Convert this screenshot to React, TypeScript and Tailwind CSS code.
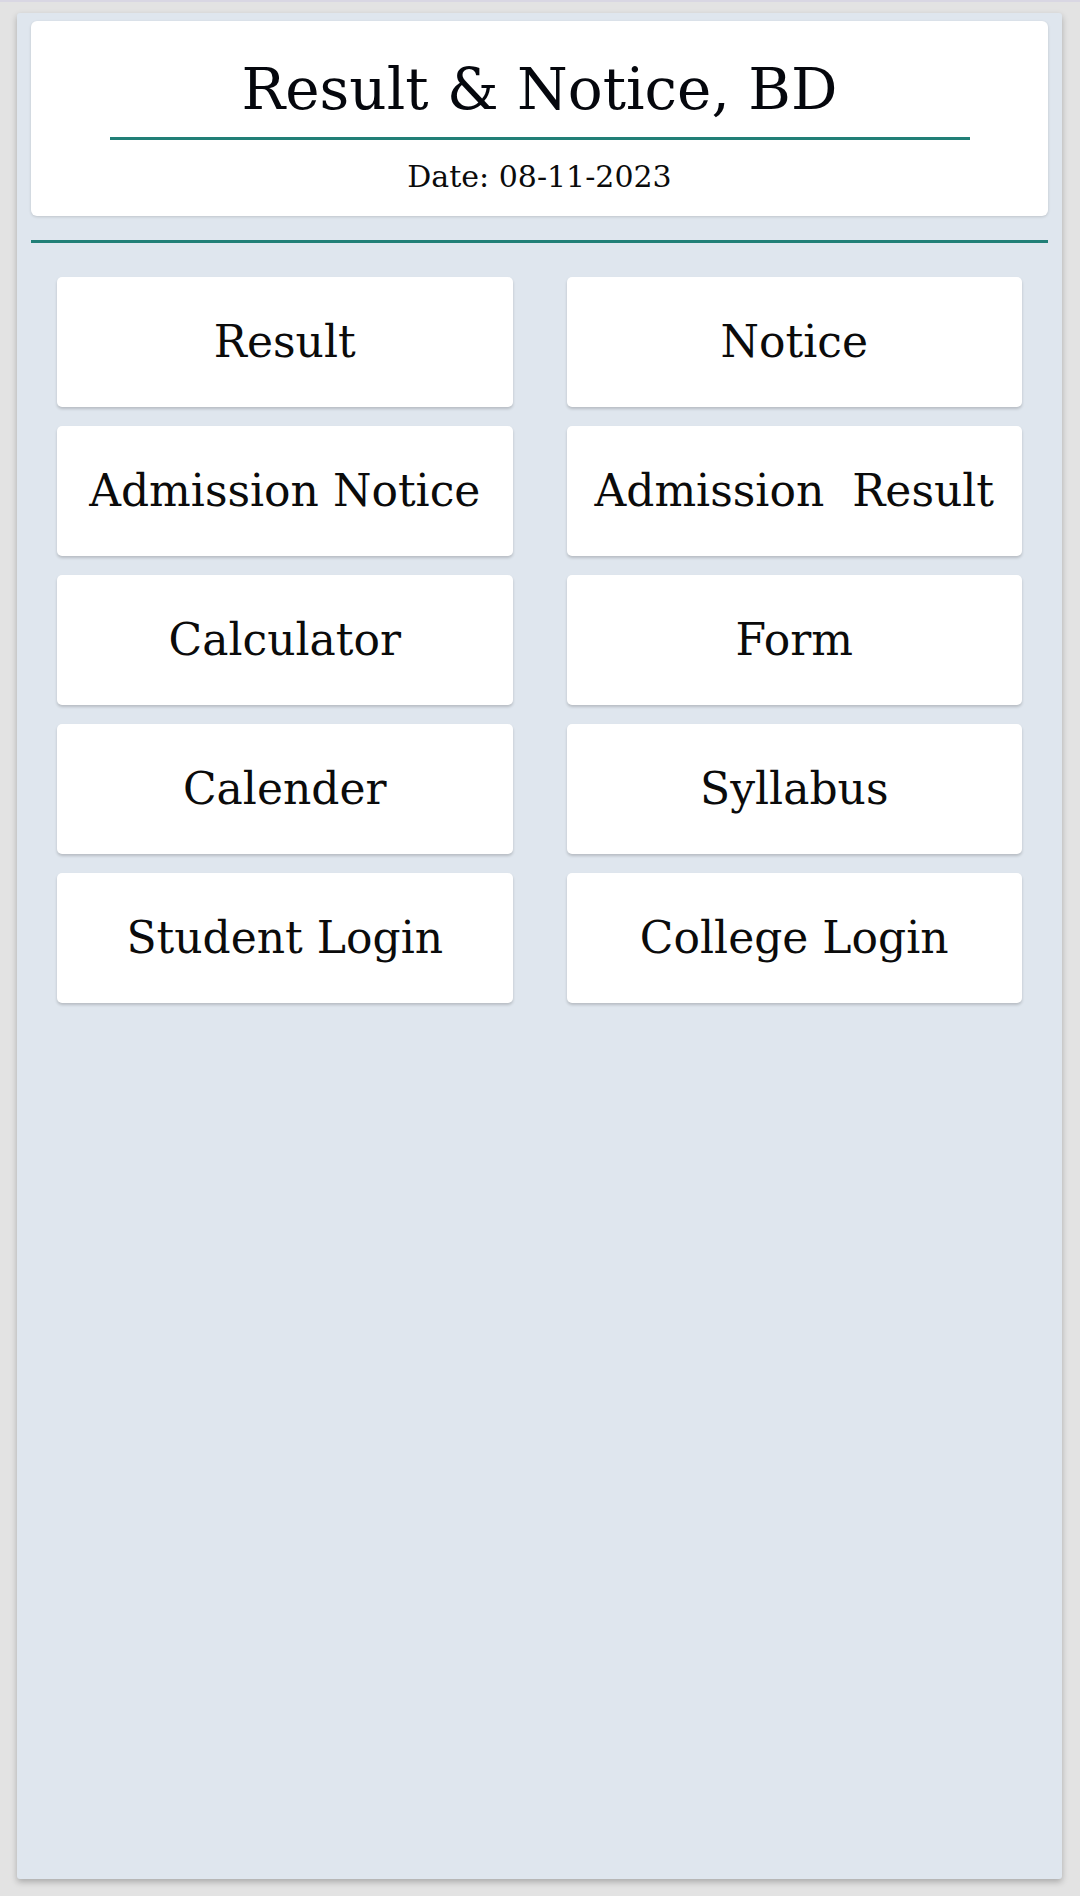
import React from 'react';

const items: string[] = [
  'Result',
  'Notice',
  'Admission Notice',
  'Admission  Result',
  'Calculator',
  'Form',
  'Calender',
  'Syllabus',
  'Student Login',
  'College Login',
];

const MenuButton: React.FC<{ label: string }> = ({ label }) => (
  <button className="h-[130px] w-full bg-white rounded-[5px] shadow-[0_2px_3px_rgba(0,0,0,0.18)] flex items-center justify-center text-[44px] text-[#0b0b0b] whitespace-pre">
    {label}
  </button>
);

export default function App() {
  return (
    <div
      className="min-h-screen bg-[#e3e3e3] border-t-2 border-[#d9d7e3] pt-[11px] pl-[17px] pr-[18px]"
      style={{ fontFamily: '"DejaVu Serif", serif' }}
    >
      <div className="h-[1866px] bg-[#dfe6ee] rounded-[3px] shadow-[0_3px_6px_rgba(0,0,0,0.25)] px-[14px] pt-[8px]">
        <div className="h-[195px] bg-white rounded-[6px] shadow-[0_1px_3px_rgba(0,0,0,0.15)] flex flex-col items-center pt-[33px]">
          <h1 className="text-[58px] leading-[70px] text-[#05070d]">Result &amp; Notice, BD</h1>
          <div className="w-[860px] h-[3px] bg-[#217f77] mt-[13px]" />
          <p className="text-[30px] leading-[40px] mt-[17px] text-[#0b0b0b]">Date: 08-11-2023</p>
        </div>
        <div className="h-[3px] bg-[#217f77] mt-[24px]" />
        <div className="grid grid-cols-2 gap-x-[54px] gap-y-[19px] px-[26px] mt-[34px]">
          {items.map((label) => (
            <MenuButton key={label} label={label} />
          ))}
        </div>
      </div>
    </div>
  );
}
